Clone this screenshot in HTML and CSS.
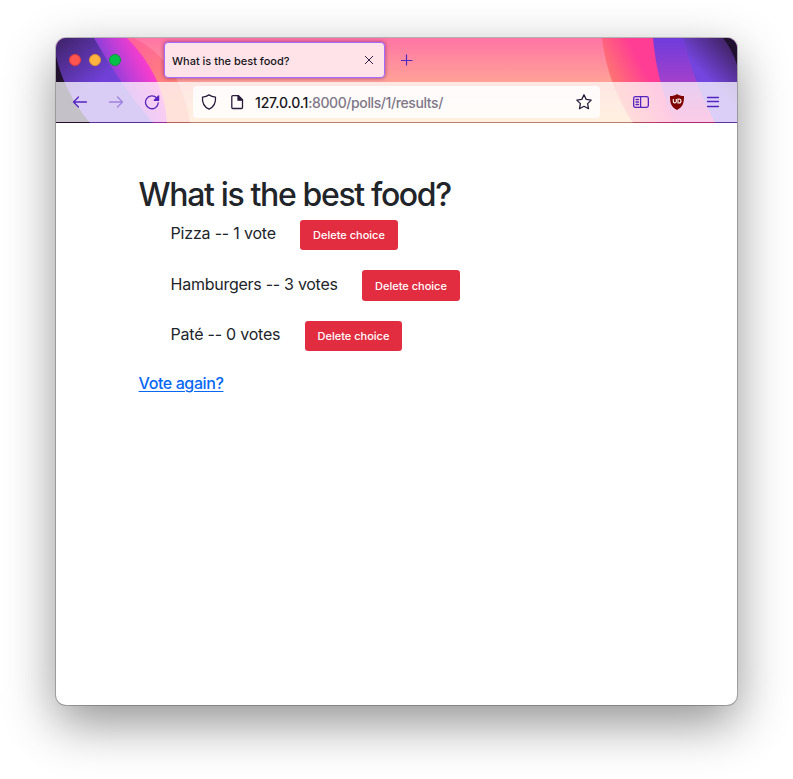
FILE: index.html
```html
<!DOCTYPE html>
<html lang="en">
<head>
<meta charset="utf-8">
<title>What is the best food?</title>
<link rel="stylesheet" href="styles.css">
</head>
<body>
<div class="window">
  <header class="chrome">
    <svg class="art" viewBox="0 0 681 85" preserveAspectRatio="none" aria-hidden="true">
      <defs>
        <linearGradient id="sky" x1="0" y1="0" x2="0" y2="1"><stop offset="0" stop-color="#ff75a5"/><stop offset=".5" stop-color="#ffa098"/><stop offset="1" stop-color="#ffc58a"/></linearGradient>
        <linearGradient id="coral" gradientUnits="userSpaceOnUse" x1="85" y1="0" x2="125" y2="60"><stop offset="0" stop-color="#ff6399"/><stop offset="1" stop-color="#ff8f70"/></linearGradient>
        <linearGradient id="magenta" gradientUnits="userSpaceOnUse" x1="48" y1="34" x2="88" y2="14"><stop offset="0" stop-color="#7840d8"/><stop offset=".5" stop-color="#c23ed7"/><stop offset="1" stop-color="#ff3dca"/></linearGradient>
        <linearGradient id="violet" gradientUnits="userSpaceOnUse" x1="5" y1="0" x2="42" y2="44"><stop offset="0" stop-color="#40246d"/><stop offset="1" stop-color="#7040d7"/></linearGradient>
        <linearGradient id="rose" gradientUnits="userSpaceOnUse" x1="552" y1="36" x2="582" y2="20"><stop offset="0" stop-color="#ff7572"/><stop offset="1" stop-color="#ff3d94"/></linearGradient>
        <linearGradient id="purple" x1="0" y1="0" x2="0" y2="1"><stop offset="0" stop-color="#6e3cdb"/><stop offset=".5" stop-color="#a040cc"/><stop offset="1" stop-color="#f03b9f"/></linearGradient>
        <linearGradient id="indigo" gradientUnits="userSpaceOnUse" x1="668" y1="5" x2="641" y2="30"><stop offset="0" stop-color="#45266f"/><stop offset="1" stop-color="#7545df"/></linearGradient>
      </defs>
      <path d="M0 0h681v85H0z" fill="url(#sky)"/>
      <path d="M0 0H78Q126 24 134 85H0z" fill="url(#coral)"/>
      <path d="M0 0H71Q108 37 111 85H0z" fill="url(#magenta)"/>
      <path d="M0 0H38Q64 47 97 85H0z" fill="url(#violet)"/>
      <path d="M0 18Q8 54 34 85H0z" fill="#20122f"/>
      <path d="M546 0Q551 45 577 85H681V0z" fill="url(#rose)"/>
      <path d="M597 0Q601 46 619 85H681V0z" fill="url(#purple)"/>
      <path d="M627 0Q638 44 659 85H681V0z" fill="url(#indigo)"/>
      <path d="M667 0Q677 13 681 27V0z" fill="#20122f"/>
    </svg>
    <div class="tabs">
      <span class="light close"></span><span class="light minimize"></span><span class="light maximize"></span>
      <div class="tab"><span class="tab-title">What is the best food?</span>
        <svg width="10" height="10" viewBox="0 0 10 10"><path d="M1 1l8 8M9 1L1 9"/></svg></div>
      <svg class="plus" width="12" height="12" viewBox="0 0 12 12"><path d="M5.500 .5v11M0 6.500h11.500"/></svg>
    </div>
    <div class="toolbar">
      <svg class="icon" viewBox="0 0 16 16"><path d="M14.500 8H1.500M6.500 3L1.500 8l5 5"/></svg>
      <svg class="icon faded" viewBox="0 0 16 16"><path d="M1.500 8h13M9.500 3l5 5-5 5"/></svg>
      <svg class="icon" viewBox="0 0 16 16"><path d="M12.800 4.200A6.400 6.400 0 1 0 14.300 8.800"/><path d="M14.600 2v4.300h-4.300z" class="solid"/></svg>
      <div class="address">
        <svg class="icon shield" viewBox="0 0 16 16"><path d="M8 .9C6 2.300 4 2.900 1.500 3.200 1 8.600 3 12.700 8 15.200c5-2.500 7-6.600 6.500-12C12 2.900 10 2.300 8 .9z"/></svg>
        <svg class="icon page" viewBox="0 0 16 16"><path d="M3.800 1.700h5.700l4 4v7.800a1 1 0 0 1-1 1H3.800a1 1 0 0 1-1-1V2.700a1 1 0 0 1 1-1z"/><path d="M9 1.700v4.500h4.500z" class="solid"/></svg>
        <span class="url"><b>127.0.0.1</b>:8000/polls/1/results/</span>
        <svg class="icon star" viewBox="0 0 16 16"><path d="M8 .8l2.200 4.600 5 .7-3.600 3.500.9 5.100L8 12.300l-4.500 2.400.9-5.100L.8 6.100l5-.7z"/></svg>
      </div>
      <svg class="icon sidebar" viewBox="0 0 16 16"><rect x=".65" y="2.600" width="14.700" height="10.800" rx="1.800"/><path d="M7.600 2.600v10.800M3 5.500h2.500M3 8h2.500M3 10.500h2.500"/></svg>
      <svg class="ublock" viewBox="0 0 16 16"><path d="M8 0c2 1.500 4 2 7 2 0 7-1 11-7 14C2 13 1 9 1 2c3 0 5-.5 7-2z" fill="#800000"/><path d="M4.300 5v2.400a1.500 1.500 0 0 0 3 0V5M9 9V5h1a2 2 0 0 1 0 4z" fill="none" stroke="#fff" stroke-width="1.100"/></svg>
      <svg class="icon menu" viewBox="0 0 16 16"><path d="M2.500 3.500h11M2.500 7.500h11M2.500 12.500h11"/></svg>
    </div>
    <div class="edge"></div>
  </header>
  <main>
    <h1>What is the best food?</h1>
    <ul>
      <li><span class="pizza">Pizza -- 1 vote</span><button>Delete choice</button></li>
      <li><span class="burgers">Hamburgers -- 3 votes</span><button>Delete choice</button></li>
      <li><span class="pate">Paté -- 0 votes</span><button>Delete choice</button></li>
    </ul>
    <a href="#">Vote again?</a>
  </main>
</div>
</body>
</html>
```
FILE: styles.css
```css
* { box-sizing: border-box; }
body { display: flow-root; margin: 0; height: 779px; overflow: hidden; background: #fff; font-family: Inter, "Liberation Sans", sans-serif; }
.window { width: 681px; height: 667px; margin: 38px 0 0 56px; border-radius: 10px; overflow: hidden; background: #fff; box-shadow: 0 0 0 1px rgba(0,0,0,.23), 0 18px 50px rgba(0,0,0,.43); }
.chrome { position: relative; height: 85px; }
.art { position: absolute; inset: 0; width: 681px; height: 85px; }
.tabs { position: relative; height: 44px; display: flex; align-items: center; padding-left: 13px; }
.light { width: 12px; height: 12px; border-radius: 50%; margin-right: 8px; border: 1px solid; }
.close { background: #ff5550; border-color: #e93e3b; }
.minimize { background: #ffb340; border-color: #df9730; }
.maximize { background: #04c149; border-color: #079b35; }
.tab { width: 221px; height: 36px; margin-left: 35px; padding: 0 10px 0 7px; display: flex; align-items: center; justify-content: space-between; border: 1px solid #a56aff; border-radius: 4px; background: #ffe3e8; box-shadow: 0 0 4px rgba(100,20,110,.65); color: #15141a; }
.tab-title { font-size: 11px; font-weight: 450; padding-top: 2px; white-space: nowrap; }
.tab svg { stroke: #342444; fill: none; stroke-width: 1; }
.plus { margin-left: 16px; stroke: #4b2bc8; stroke-width: 1.2; }
.toolbar { position: relative; height: 40px; padding-left: 16px; display: flex; align-items: center; background: rgba(255,255,255,.74); }
.edge { position: relative; height: 1px; background: rgba(50,10,50,.35); }
.icon { flex: none; width: 16px; height: 16px; fill: none; stroke: #5525c0; stroke-width: 1.3; stroke-linejoin: round; stroke-linecap: round; margin-right: 20px; }
.icon .solid { fill: #5525c0; }
.faded { opacity: .43; }
.address { width: 407px; height: 32px; margin-left: 13px; padding-left: 8px; display: flex; align-items: center; border-radius: 4px; background: rgba(255,255,255,.82); }
.address .icon { stroke: #291d3c; }
.address .solid { fill: #291d3c; }
.address .shield { margin-right: 12px; }
.address .page { margin-right: 10px; }
.url { flex: 1; font-size: 14px; font-weight: 450; letter-spacing: -.4px; color: #7e7788; white-space: nowrap; padding-top: 1px; }
.url b { font-weight: 450; color: #15141a; letter-spacing: -.16px; }
.address .star { margin-right: 8px; }
.sidebar { margin-left: 33px; }
.ublock { width: 16px; height: 16px; margin-right: 20px; flex: none; }
.menu { margin-right: 0; }
main { padding: 51px 82.6px; color: #212529; }
h1 { margin: 0; font-size: 32px; line-height: 42px; font-weight: 550; letter-spacing: -1.36px; white-space: nowrap; }
ul { list-style: none; margin: 4px 0 0; padding: 0 0 0 32px; }
li { display: flex; height: 30px; margin-bottom: 20.4px; font-size: 16px; line-height: 26px; white-space: nowrap; }
.pizza { width: 129.4px; letter-spacing: -.19px; }
.burgers { width: 191.4px; letter-spacing: -.27px; line-height: 28px; }
.pate { width: 134.4px; letter-spacing: -.23px; }
button { width: 98px; height: 30px; padding: 0; border: 0; border-radius: 3.2px; background: #e12d3f; color: #fff; font: 500 11px Inter, sans-serif; white-space: nowrap; }
li:nth-child(2) button { height: 31px; }
li:nth-child(3) button { width: 97px; }
a { display: inline-block; font-size: 16px; line-height: 25px; font-weight: 450; color: #0768f5; letter-spacing: -.4px; text-decoration: underline; text-underline-offset: 2px; }
```
